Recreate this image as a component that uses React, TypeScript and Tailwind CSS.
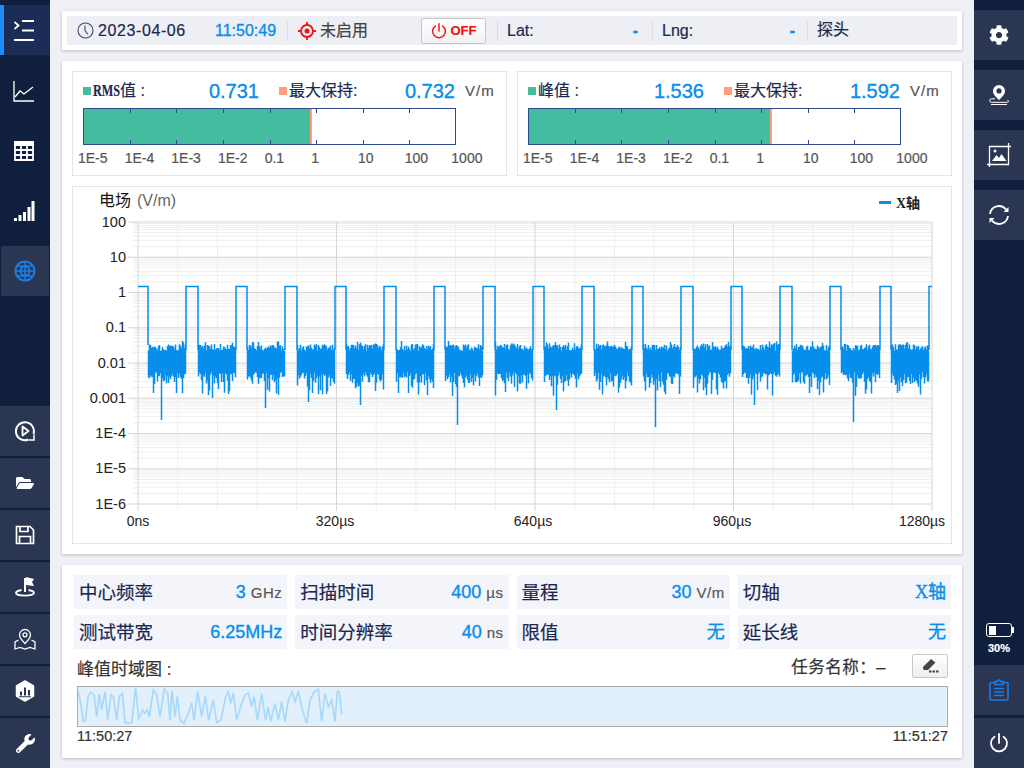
import type { ReactNode } from "react";
import { FaCog, FaFolderOpen, FaWrench } from "react-icons/fa";

const blue = "text-[#068eed] [-webkit-text-stroke:0.35px]";

// 幅度网格：每个十倍程 35.25px
const DECADE_Y = [222, 257.2, 292.5, 327.8, 363, 398.2, 433.5, 468.8, 504];
const DECADE_LABELS = ["100", "10", "1", "0.1", "0.01", "0.001", "1E-4", "1E-5", "1E-6"];
const PULSES: [number, number][] = [
  [186, 198], [236, 247], [285, 297], [335, 346], [384, 396], [434, 445], [483, 495], [533, 544],
  [582, 594], [632, 643], [681, 693], [731, 742], [780, 792], [830, 841], [880, 891],
];
const DEEP: Record<number, number> = { 161: 420, 265: 408, 457: 425, 556: 410, 655: 427, 754: 405, 853: 422, 212: 398, 360: 405, 308: 402 };

function tracePath() {
  let seed = 7;
  const rnd = () => {
    seed = (seed * 1664525 + 1013904223) % 4294967296;
    return seed / 4294967296;
  };
  let d = "M138 286.5H148V345";
  let from = 148;
  for (const [start, end] of [...PULSES, [929, 932] as [number, number]]) {
    for (let x = from; x < start; x++) {
      const top = rnd() < 0.1 ? 341 + rnd() * 4 : 344 + rnd() * 7;
      const r = rnd();
      let bottom = r < 0.14 ? 384 + rnd() * 12 : r < 0.45 ? 378 + rnd() * 6 : 372 + rnd() * 6;
      if (DEEP[x]) bottom = DEEP[x];
      d += `M${x + 0.5} ${top.toFixed(1)}V${bottom.toFixed(1)}`;
    }
    d += `M${start} 350V286.5H${end}`;
    if (end < 932) d += "V350";
    from = end;
  }
  return d;
}

const SPARK = [
  55,395, 62,430, 70,483, 76,484, 84,410, 92,397, 102,405, 110,470, 118,402, 125,450, 135,395, 143,480, 153,405, 160,410, 170,480, 178,410, 187,400, 195,487, 205,490, 215,488, 227,383, 236,475, 248,450, 254,460, 262,450, 268,470, 280,390, 290,405, 300,470, 313,387, 323,400, 330,480, 336,393, 345,470, 352,410, 360,480, 372,490, 385,460, 395,428, 402,480, 413,395, 425,470, 436,408, 446,480, 460,420, 470,488, 483,480, 497,410, 505,395, 512,430, 520,398, 530,480, 545,430, 555,405, 565,400, 575,440, 582,410, 592,480, 605,402, 617,480, 624,440, 632,485, 645,430, 655,480, 665,425, 675,485, 685,420, 697,395, 705,425, 715,395, 727,450, 740,490, 750,420, 763,395, 775,388, 785,485, 795,400, 805,440, 815,420, 825,485, 832,395, 838,395, 845,463,
];

const Menu = () => (
  <svg width="24" height="24" viewBox="0 0 24 24" fill="none" stroke="white" strokeWidth="1.8">
    <path d="M8 3h12M8 12.500h12M0 22h20" />
    <path d="M0.500 4l4 3.500-4 3.500" />
  </svg>
);
const LineChart = () => (
  <svg width="22" height="22" viewBox="0 0 22 22" fill="none" stroke="white" strokeWidth="1.3">
    <path d="M1 1v20h20" />
    <path d="M2 17l5-6 4 3 9-7" />
  </svg>
);
const Table = () => (
  <svg width="20" height="20" viewBox="0 0 20 20" fill="none" stroke="white" strokeWidth="1.800">
    <path d="M1 1h18v18H1z" />
    <path d="M0 3h20" strokeWidth="4" />
    <path d="M1 9h18M1 14h18M7 5v14M13 5v14" />
  </svg>
);
const Signal = () => (
  <svg width="22" height="22" viewBox="0 0 22 22" fill="white">
    <rect x="1" y="18" width="3" height="3" />
    <rect x="5.500" y="15" width="3" height="6" />
    <rect x="10" y="12" width="3" height="9" />
    <rect x="14.500" y="7" width="3" height="14" />
    <rect x="18.500" y="1" width="3" height="20" />
  </svg>
);
const Globe = () => (
  <svg width="22" height="22" viewBox="0 0 22 22" fill="none" stroke="#1d7de6" strokeWidth="2">
    <circle cx="11" cy="11" r="9.500" />
    <circle cx="11" cy="11" r="4.500" />
    <path d="M1.500 11h19M11 1.500v19M3.500 6h15M3.500 16h15" strokeWidth="1.500" />
  </svg>
);
const Replay = () => (
  <svg width="22" height="22" viewBox="0 0 22 22" fill="none" stroke="white" strokeWidth="2">
    <path d="M14.500 19.500A9 9 0 1 1 19.500 14" />
    <path d="M8.500 6.500l6 4.500-6 4.500z" strokeWidth="1.800" strokeLinejoin="round" />
    <path d="M20 14.500v5.500h-5" strokeWidth="1.500" />
  </svg>
);
const Save = () => (
  <svg width="20" height="20" viewBox="0 0 20 20" fill="none" stroke="white" strokeWidth="1.700">
    <path d="M1.500 1.500h13.500l3.500 3.500v13.500h-17z" />
    <path d="M5 1.500v5h8v-5M4.500 18.500v-7h11v7" />
  </svg>
);
const Flag = () => (
  <svg width="22" height="22" viewBox="0 0 22 22" fill="none" stroke="white">
    <path d="M11 2v14" strokeWidth="2" />
    <path d="M12 1l8 2-2 3 2 4-8-1z" fill="white" stroke="none" />
    <path d="M7.500 14c-3.500.6-5.500 1.700-5.500 3 0 1.500 4 2.600 9 2.600s9-1.100 9-2.600c0-1.300-2-2.400-5.500-3" strokeWidth="1.800" />
  </svg>
);
const MapPin = () => (
  <svg width="22" height="22" viewBox="0 0 22 22" fill="none" stroke="white" strokeWidth="1.300">
    <path d="M11 15.500c-3-3-5.500-5.500-5.500-8.500a5.500 5.500 0 0 1 11 0c0 3-2.500 5.500-5.500 8.500z" />
    <circle cx="11" cy="6.800" r="2" />
    <path d="M4.500 12L1 14v7l5-1.500 5 1.500 5-1.500 5 1.500v-7l-3.500-2" />
  </svg>
);
const HexChart = () => (
  <svg width="20" height="22" viewBox="0 0 20 22">
    <path d="M10 1l8.500 5v10l-8.500 5-8.500-5V6z" fill="white" stroke="white" strokeLinejoin="round" strokeWidth="1.500" />
    <path d="M5 11.500h2v4H5zM9 7.500h2v8H9zM13 10h2v5.500h-2zM4 16.200h12v1H4z" fill="#2b3652" />
  </svg>
);
const Pin = () => (
  <svg width="22" height="22" viewBox="0 0 22 22" fill="none">
    <path fillRule="evenodd" d="M11 16c-3-3-6-5.500-6-9a6 6 0 0 1 12 0c0 3.500-3 6-6 9zm0-6.500a2.600 2.600 0 1 0 0-5.200 2.600 2.600 0 0 0 0 5.200z" fill="white" />
    <path d="M7 14.800H3.500a1.700 1.700 0 0 0 0 3.500H19.500a1 1 0 0 0 0-2M3 20.500h16" stroke="white" strokeWidth="1" />
  </svg>
);
const ImageCrop = () => (
  <svg width="24" height="24" viewBox="0 0 24 24" fill="none" stroke="white" strokeWidth="1.300">
    <path d="M2.500 3.500h19v18h-19z" />
    <path d="M21.500 0v3.500H24M2.500 24v-2.500H0" />
    <path d="M5 18l4.500-6 2.500 3 2.500-4 5 7z" fill="white" stroke="none" />
    <circle cx="8" cy="8" r="1.500" fill="white" stroke="none" />
  </svg>
);
const Refresh = () => (
  <svg width="22" height="22" viewBox="0 0 22 22" fill="none" stroke="white" strokeWidth="1.800">
    <path d="M2 10a9 9 0 0 1 16-4.500" />
    <path d="M20 12a9 9 0 0 1-16 4.500" />
    <path d="M20.500 3v5H15.500z" fill="white" stroke="none" />
    <path d="M1.500 19v-5H6.500z" fill="white" stroke="none" />
  </svg>
);
const Power = ({ color = "white", size = 20 }: { color?: string; size?: number }) => (
  <svg width={size} height={size} viewBox="0 0 20 20" fill="none" stroke={color} strokeWidth="1.800" strokeLinecap="round">
    <path d="M10 1v9" />
    <path d="M5.500 3.800a8 8 0 1 0 9 0" />
  </svg>
);
const Clipboard = () => (
  <svg width="20" height="22" viewBox="0 0 20 22" fill="none" stroke="#1d7de6" strokeWidth="1.600">
    <path d="M6 3.500H2a1 1 0 0 0-1 1V20a1 1 0 0 0 1 1h16a1 1 0 0 0 1-1V4.500a1 1 0 0 0-1-1h-4" />
    <path d="M6 5.500V2.500h2.500a1.500 1.500 0 0 1 3 0H14v3z" />
    <path d="M5 9.500h10M5 13h10M5 16.500h10" />
  </svg>
);
const Clock = () => (
  <svg width="17" height="17" viewBox="0 0 17 17" fill="none" stroke="#3d4a6b" strokeWidth="1.100">
    <circle cx="8.500" cy="8.500" r="7.500" />
    <path d="M8 3.500v5l3 4" />
  </svg>
);
const Target = () => (
  <svg width="18" height="18" viewBox="0 0 18 18" fill="none" stroke="#f01414" strokeWidth="1.800">
    <circle cx="9" cy="9" r="6" />
    <circle cx="9" cy="9" r="2.500" fill="#f01414" stroke="none" />
    <path d="M9 0v3M9 15v3M0 9h3M15 9h3" />
  </svg>
);
const Eraser = () => (
  <svg width="18" height="16" viewBox="0 0 18 16" fill="#444">
    <path d="M10 1l4.500 3.500-7.500 7.500H2.500L2 9z" />
    <rect x="8" y="12.500" width="2.500" height="2" />
    <rect x="11.500" y="12.500" width="2.500" height="2" />
    <rect x="15" y="12.500" width="2.500" height="2" />
  </svg>
);

const LEFT_LOWER = [<Replay />, <FaFolderOpen size={18} color="white" />, <Save />, <Flag />, <MapPin />, <HexChart />, <FaWrench size={19} color="white" />];
const RIGHT_TOP = [<FaCog size={20} color="white" />, <Pin />, <ImageCrop />, <Refresh />];

const METER_TICKS = [47, 93, 140, 187, 233, 280, 326];
const METER_LABELS = ["1E-5", "1E-4", "1E-3", "1E-2", "0.1", "1", "10", "100", "1000"];

// RMS 在原图里是窄衬线字
const Rms = () => (
  <span className="inline-block w-[27px] origin-left scale-x-[0.76] whitespace-nowrap font-['Liberation_Serif',serif] text-[16px] font-bold">RMS</span>
);

function Meter({ label, serif, value, max, fill }: { label: string; serif?: boolean; value: string; max: string; fill: number }) {
  return (
    <div className="h-[105px] w-[435px] border border-[#e4e5ea] bg-white">
      <div className="ml-[10px] mt-[6px] flex h-[26px] items-center">
        <div className="flex w-[176px] items-center justify-between">
          <div className="flex items-center text-[16px] text-[#1a2850]">
            <span className="mr-[2px] h-[8px] w-[8px] bg-[#44bca0]" />
            {serif && <Rms />}
            <span>{label}</span>
          </div>
          <span className={`text-[20px] ${blue}`}>{value}</span>
        </div>
        <div className="ml-[20px] flex w-[176px] items-center justify-between">
          <div className="flex items-center text-[16px] text-[#1a2850]">
            <span className="mr-[2px] h-[8px] w-[8px] bg-[#ff9f7a]" />
            <span>最大保持:</span>
          </div>
          <span className={`text-[20px] ${blue}`}>{max}</span>
        </div>
        <span className="ml-[10px] text-[15px] tracking-[1px] text-[#555]">V/m</span>
      </div>
      <div className="relative ml-[10px] mt-[4px] flex h-[37px] w-[373px] border border-[#2f4a8f] bg-white">
        <div className="bg-[#44bca0]" style={{ width: fill }} />
        <div className="w-[2px] bg-[#ff9f7a]" />
        <svg className="absolute left-0 top-0" width="371" height="35" stroke="#2f4a8f">
          {METER_TICKS.map((x) => (
            <path key={x} d={`M${x - 0.5} 0v4M${x - 0.5} 31v4`} />
          ))}
        </svg>
      </div>
      <div className="ml-[5px] mt-[4px] grid w-[420px] grid-cols-9 text-[14px] leading-[18px] text-[#555]">
        {METER_LABELS.map((t) => (
          <span key={t}>{t}</span>
        ))}
      </div>
    </div>
  );
}

function Chart() {
  const minors: number[] = [];
  DECADE_Y.slice(0, -1).forEach((y, i) => {
    const h = DECADE_Y[i + 1] - y;
    for (let k = 2; k < 10; k++) minors.push(y + h * (1 - Math.log10(k)));
  });
  const verts = Array.from({ length: 21 }, (_, i) => 138 + i * 39.7);
  return (
    <svg width="878" height="356" viewBox="73 187 878 356" className="block font-['Liberation_Sans','Noto_Sans_CJK_SC',sans-serif] [-webkit-text-stroke:0]">
      {minors.map((y) => (
        <line key={y} x1="133" x2="932" y1={y} y2={y} stroke="#eeeeee" />
      ))}
      {verts.map((x, i) => (
        <line key={x} x1={x} x2={x} y1="222" y2={i % 5 === 0 ? 511 : 510} stroke={i % 5 === 0 ? "#d6d6d6" : "#eeeeee"} />
      ))}
      {DECADE_Y.map((y, i) => (
        <g key={y}>
          <line x1="128" x2="932" y1={y} y2={y} stroke="#d6d6d6" />
          <text x="126" y={y + 4.5} textAnchor="end" fontSize="14.500" fill="#222">{DECADE_LABELS[i]}</text>
        </g>
      ))}
      <path d={tracePath()} fill="none" stroke="#068eed" strokeWidth="1.500" />
      {[["0ns", 138], ["320µs", 335], ["640µs", 533], ["960µs", 732], ["1280µs", 922]].map(([t, x]) => (
        <text key={t} x={x} y="526" textAnchor="middle" fontSize="14" fill="#222">{t}</text>
      ))}
      <text x="99" y="206" fontSize="16" fill="#111" fontFamily="Noto Sans CJK SC">电场</text>
      <text x="137" y="206" fontSize="16" fill="#666">(V/m)</text>
      <rect x="879" y="201" width="12" height="3" fill="#068eed" />
      <text x="896" y="208" fontSize="14" fontWeight="700" fill="#222" fontFamily="Liberation Serif, Noto Sans CJK SC">X轴</text>
    </svg>
  );
}

function Param({ label, value, unit }: { label: string; value: ReactNode; unit?: string }) {
  return (
    <div className="flex h-[34px] items-center justify-between bg-[#f3f5fa] pl-[5px] pr-[5px]">
      <span className="translate-y-[1px] text-[18.500px] text-[#1a2850]">{label}</span>
      <span className="flex items-baseline gap-[5px]">
        <span className={`text-[18px] ${blue}`}>{value}</span>
        {unit && <span className="text-[15px] tracking-[0.5px] text-[#555]">{unit}</span>}
      </span>
    </div>
  );
}

export default function App() {
  return (
    <div className="flex h-[768px] w-[1024px] overflow-hidden bg-[#eef0f5] font-['Liberation_Sans','Noto_Sans_CJK_SC',sans-serif] [-webkit-text-stroke:0.2px]">
      <aside className="flex w-[50px] shrink-0 flex-col bg-[#101f3e]">
        <div className="mt-[5px] flex h-[50px] items-center justify-center border-l-4 border-[#1e8cff] bg-[#1b2d57] pr-[2px]">
          <Menu />
        </div>
        <div className="mt-[11px] flex h-[50px] items-center justify-center pr-[2px]"><LineChart /></div>
        <div className="mt-[10px] flex h-[50px] items-center justify-center pr-[2px]"><Table /></div>
        <div className="mt-[10px] flex h-[50px] items-center justify-center pr-[2px]"><Signal /></div>
        <div className="ml-[1px] mr-[1px] mt-[10px] flex h-[50px] items-center justify-center bg-[#2b3652]"><Globe /></div>
        <div className="mt-auto flex flex-col gap-[2px]">
          {LEFT_LOWER.map((icon, i) => (
            <div key={i} className="flex h-[50px] items-center justify-center bg-[#2b3652]">{icon}</div>
          ))}
        </div>
      </aside>

      <main className="flex w-[924px] flex-col px-[12px] pt-[11px]">
        <div className="h-[39px] bg-white p-[5px] shadow-[0_1px_3px_rgba(0,0,0,0.22)]">
          <div className="flex h-[29px] items-center bg-[#eeeff5] text-[16px] text-[#1a2850]">
            <div className="ml-[10px] flex w-[210px] items-center">
              <Clock />
              <span className="ml-[4px] w-[117px] tracking-[0.6px]">2023-04-06</span>
              <span className={blue}>11:50:49</span>
            </div>
            <div className="h-[20px] w-px bg-[#dcdde3]" />
            <div className="ml-[10px] flex w-[123px] items-center text-[#444]">
              <Target />
              <span className="ml-[4px]">未启用</span>
            </div>
            <button className="flex h-[26px] w-[65px] items-center justify-center gap-[4px] rounded-[2px] border border-[#c8c8c8] bg-gradient-to-b from-white to-[#f1f1f1] text-[13px] font-bold text-[#f01414]">
              <Power color="#f01414" size={16} />
              OFF
            </button>
            <div className="ml-[11px] h-[20px] w-px bg-[#dcdde3]" />
            <div className="flex w-[154px] justify-between pl-[9px] pr-[14px]">
              <span>Lat:</span>
              <span className={`font-bold ${blue}`}>-</span>
            </div>
            <div className="h-[20px] w-px bg-[#dcdde3]" />
            <div className="flex w-[154px] justify-between pl-[9px] pr-[12px]">
              <span>Lng:</span>
              <span className={`font-bold ${blue}`}>-</span>
            </div>
            <div className="h-[20px] w-px bg-[#dcdde3]" />
            <span className="ml-[9px] -translate-y-[1px]">探头</span>
          </div>
        </div>

        <div className="mt-[11px] h-[493px] bg-white p-[10px] shadow-[0_1px_3px_rgba(0,0,0,0.22)]">
          <div className="flex gap-[10px]">
            <Meter serif label="值 :" value="0.731" max="0.732" fill={226} />
            <Meter label="峰值 :" value="1.536" max="1.592" fill={241} />
          </div>
          <div className="mt-[10px] h-[358px] border border-[#e4e5ea]">
            <Chart />
          </div>
        </div>

        <div className="mt-[11px] h-[193px] bg-white pl-[12px] pr-[11px] pt-[10px] shadow-[0_1px_3px_rgba(0,0,0,0.22)]">
          <div className="grid grid-cols-4 gap-x-[8px] gap-y-[6px]">
            <Param label="中心频率" value="3" unit="GHz" />
            <Param label="扫描时间" value="400" unit="µs" />
            <Param label="量程" value="30" unit="V/m" />
            <Param label="切轴" value={<span className="font-['Liberation_Serif','Noto_Sans_CJK_SC',serif]">X轴</span>} />
            <Param label="测试带宽" value="6.25MHz" />
            <Param label="时间分辨率" value="40" unit="ns" />
            <Param label="限值" value="无" />
            <Param label="延长线" value="无" />
          </div>
          <div className="ml-[3px] mr-[3px] mt-[5px] flex h-[24px] items-center text-[#333]">
            <span className="mt-[7px] text-[17px]">峰值时域图 :</span>
            <span className="ml-auto translate-y-[1px] text-[16.500px] tracking-[0.5px]">任务名称：–</span>
            <button className="ml-[26px] flex h-[24px] w-[36px] items-center justify-center rounded-[2px] border border-[#c8c8c8] bg-gradient-to-b from-white to-[#eeeeee]">
              <Eraser />
            </button>
          </div>
          <div className="ml-[3px] mr-[3px] mt-[8px] h-[41px] border border-[#aaaaaa] bg-[#e1f0fa]">
            <svg width="869" height="39" viewBox="54 381 2607 117" fill="none" className="block">
              <polyline points={SPARK.join(" ")} stroke="#a8d8fb" strokeWidth="5" />
            </svg>
          </div>
          <div className="ml-[3px] mr-[3px] flex justify-between text-[14.500px] leading-[18px] text-[#333]">
            <span>11:50:27</span>
            <span>11:51:27</span>
          </div>
        </div>
      </main>

      <aside className="flex w-[50px] shrink-0 flex-col bg-[#101f3e]">
        <div className="mt-[10px] flex flex-col gap-[10px]">
          {RIGHT_TOP.map((icon, i) => (
            <div key={i} className="flex h-[50px] items-center justify-center bg-[#2b3652]">{icon}</div>
          ))}
        </div>
        <div className="mt-auto flex flex-col items-center">
          <div className="relative h-[14px] w-[26px] rounded-[3px] border border-white p-[1.500px]">
            <div className="h-full w-[7px] bg-white" />
            <div className="absolute -right-[3px] top-[3px] h-[6px] w-[2px] bg-white" />
          </div>
          <span className="mt-[5px] text-[11px] font-bold leading-[13px] text-white">30%</span>
          <div className="mt-[10px] flex h-[50px] w-full items-center justify-center bg-[#2b3652]"><Clipboard /></div>
          <div className="mt-[3px] flex h-[50px] w-full items-center justify-center bg-[#2b3652]"><Power /></div>
        </div>
      </aside>
    </div>
  );
}
